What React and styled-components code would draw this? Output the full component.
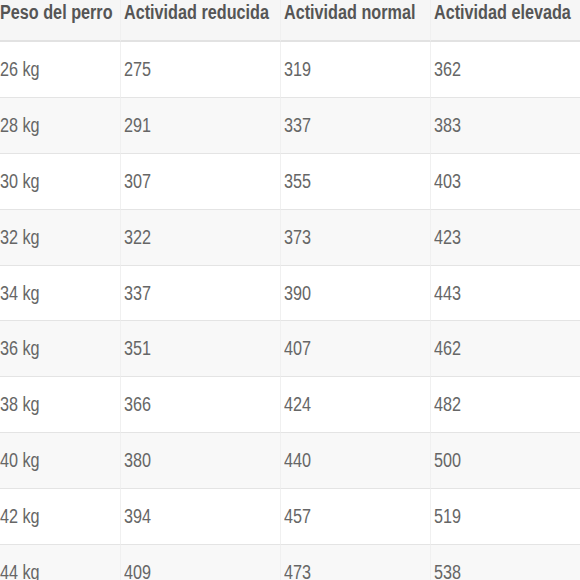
import styled, { createGlobalStyle } from 'styled-components';

const GlobalStyle = createGlobalStyle`
	html, body {
		margin: 0;
		padding: 0;
		background: #fff;
	}
	body {
		font-family: "Liberation Sans", Arial, sans-serif;
	}
`;

const Table = styled.div`
	display: grid;
	grid-template-columns: 120px 160px 150px 150px;
	width: 580px;
	overflow: hidden;
`;

const HeadCell = styled.div`
	height: 39px;
	padding: 1px 0 0 ${({ $first }) => ($first ? '0' : '3px')};
	background: #f6f6f6;
	border-bottom: 2px solid #e2e2e2;
	border-left: ${({ $first }) => ($first ? 'none' : '1px solid #f0f0f0')};
	color: #555;
	font-size: 20px;
	font-weight: 700;
	white-space: nowrap;
`;

const Cell = styled.div`
	display: flex;
	align-items: center;
	height: 54.9px;
	padding-left: ${({ $first }) => ($first ? '0' : '3px')};
	background: ${({ $striped }) => ($striped ? '#f8f8f8' : '#fff')};
	border-bottom: 1px solid #e4e4e4;
	border-left: ${({ $first }) => ($first ? 'none' : '1px solid #f0f0f0')};
	color: #666;
	font-size: 20px;
	white-space: nowrap;
`;

const Narrow = styled.span`
	display: inline-block;
	transform: scaleX(0.81);
	transform-origin: left center;
`;

const headers = ['Peso del perro', 'Actividad reducida', 'Actividad normal', 'Actividad elevada'];

const rows = [
	['26 kg', 275, 319, 362],
	['28 kg', 291, 337, 383],
	['30 kg', 307, 355, 403],
	['32 kg', 322, 373, 423],
	['34 kg', 337, 390, 443],
	['36 kg', 351, 407, 462],
	['38 kg', 366, 424, 482],
	['40 kg', 380, 440, 500],
	['42 kg', 394, 457, 519],
	['44 kg', 409, 473, 538],
];

export default function App() {
	return (
		<>
			<GlobalStyle />
			<Table>
				{headers.map((h, i) => (
					<HeadCell key={h} $first={i === 0}>
						<Narrow>{h}</Narrow>
					</HeadCell>
				))}
				{rows.map((row, r) =>
					row.map((value, c) => (
						<Cell key={`${r}-${c}`} $first={c === 0} $striped={r % 2 === 1}>
							<Narrow>{value}</Narrow>
						</Cell>
					))
				)}
			</Table>
		</>
	);
}
